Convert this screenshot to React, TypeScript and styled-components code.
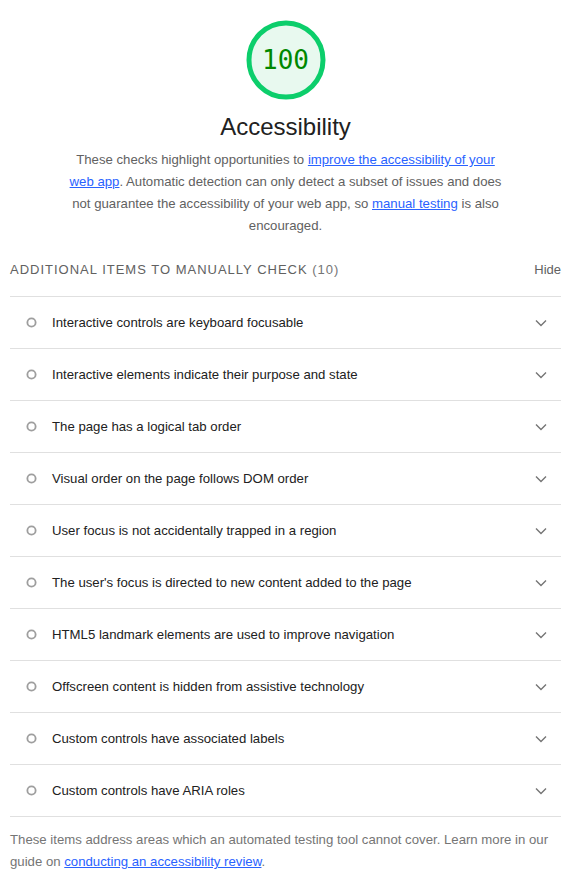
import React from 'react';
import styled, { createGlobalStyle } from 'styled-components';

const GlobalStyle = createGlobalStyle`
  html, body {
    margin: 0;
    padding: 0;
    background: #fff;
  }
  body {
    font-family: 'Liberation Sans', Arial, Helvetica, sans-serif;
  }
`;

const Page = styled.div`
  padding: 20px 12px 16px 10px;
  color: #212121;
`;

const Header = styled.div`
  display: flex;
  flex-direction: column;
  align-items: center;
`;

const Gauge = styled.div`
  position: relative;
  width: 80px;
  height: 80px;
`;

const GaugeValue = styled.div`
  position: absolute;
  inset: 0;
  display: flex;
  align-items: center;
  justify-content: center;
  font-family: 'DejaVu Sans Mono', 'Liberation Mono', monospace;
  font-size: 26px;
  color: #008800;
`;

const Title = styled.h1`
  margin: 11px 0 0;
  font-size: 24px;
  line-height: 32px;
  font-weight: 400;
  color: #212121;
`;

const Description = styled.p`
  margin: 6px 0 0;
  max-width: 440px;
  text-align: center;
  font-size: 13.2px;
  line-height: 22px;
  color: #616161;
`;

const Link = styled.a`
  color: #2962ff;
  text-decoration: underline;
`;

const GroupHeader = styled.div`
  display: flex;
  justify-content: space-between;
  align-items: center;
  margin-top: 23px;
  padding-bottom: 16px;
  font-size: 13px;
  line-height: 20px;
`;

const GroupTitle = styled.span`
  text-transform: uppercase;
  letter-spacing: 1px;
  color: #616161;
`;

const Count = styled.span`
  color: #757575;
`;

const Toggle = styled.span`
  color: #616161;
`;

const List = styled.div`
  border-bottom: 1px solid #e0e0e0;
`;

const Row = styled.div`
  display: flex;
  align-items: center;
  height: 51px;
  border-top: 1px solid #e0e0e0;
  padding: 0 14px 0 16px;
  font-size: 13.2px;
`;

const RowText = styled.span`
  flex: 1;
  margin-left: 15px;
  color: #212121;
`;

const Footer = styled.p`
  margin: 12px 0 0;
  font-size: 13.2px;
  line-height: 22px;
  color: #757575;
`;

const ManualIcon = () => (
  <svg width="11" height="11" viewBox="0 0 12 12">
    <circle cx="6" cy="6" r="4.5" fill="none" stroke="#9e9e9e" strokeWidth="2" />
  </svg>
);

const Chevron = () => (
  <svg width="12" height="8" viewBox="0 0 12 8">
    <path d="M1 1.5 L6 6.5 L11 1.5" fill="none" stroke="#757575" strokeWidth="1.4" />
  </svg>
);

const items = [
  'Interactive controls are keyboard focusable',
  'Interactive elements indicate their purpose and state',
  'The page has a logical tab order',
  'Visual order on the page follows DOM order',
  'User focus is not accidentally trapped in a region',
  "The user's focus is directed to new content added to the page",
  'HTML5 landmark elements are used to improve navigation',
  'Offscreen content is hidden from assistive technology',
  'Custom controls have associated labels',
  'Custom controls have ARIA roles',
];

export default function App() {
  return (
    <>
      <GlobalStyle />
      <Page>
        <Header>
          <Gauge>
            <svg width="80" height="80" viewBox="0 0 80 80">
              <circle cx="40" cy="40" r="37" fill="#e8f9ef" stroke="#0cce6b" strokeWidth="5" />
            </svg>
            <GaugeValue>100</GaugeValue>
          </Gauge>
          <Title>Accessibility</Title>
          <Description>
            These checks highlight opportunities to{' '}
            <Link href="#">improve the accessibility of your web app</Link>. Automatic detection can
            only detect a subset of issues and does not guarantee the accessibility of your web app,
            so <Link href="#">manual testing</Link> is also encouraged.
          </Description>
        </Header>

        <GroupHeader>
          <GroupTitle>
            Additional items to manually check <Count>(10)</Count>
          </GroupTitle>
          <Toggle>Hide</Toggle>
        </GroupHeader>

        <List>
          {items.map(item => (
            <Row key={item}>
              <ManualIcon />
              <RowText>{item}</RowText>
              <Chevron />
            </Row>
          ))}
        </List>

        <Footer>
          These items address areas which an automated testing tool cannot cover. Learn more in our
          guide on <Link href="#">conducting an accessibility review</Link>.
        </Footer>
      </Page>
    </>
  );
}
